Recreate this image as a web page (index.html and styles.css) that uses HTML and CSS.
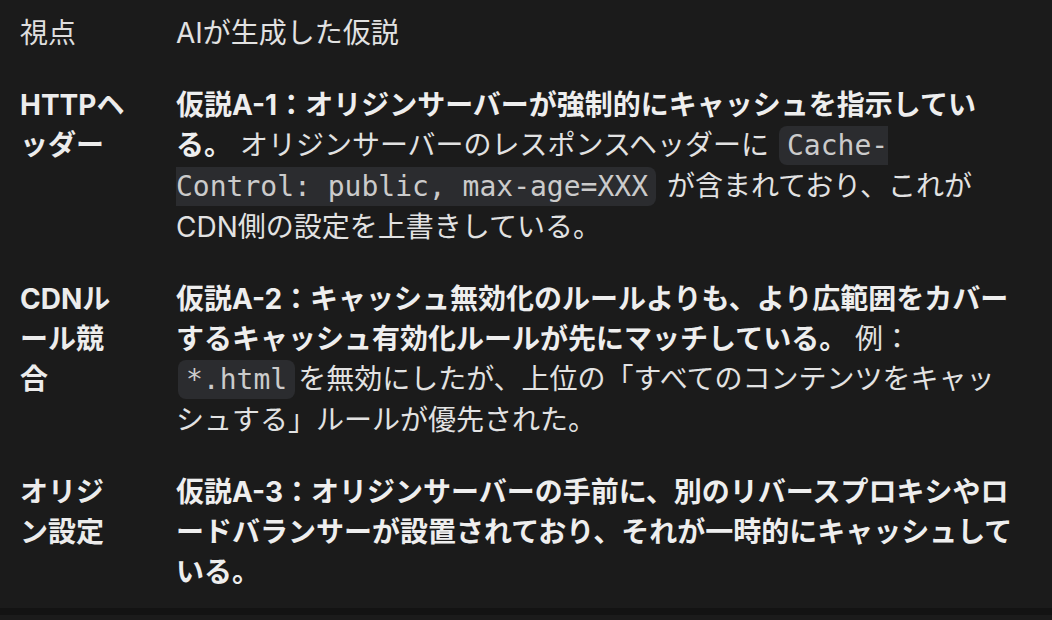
FILE: index.html
```html
<!DOCTYPE html>
<html lang="ja">
<head>
    <meta charset="UTF-8">
    <meta name="viewport" content="width=device-width, initial-scale=1.0">
    <title>仮説一覧</title>
    <link rel="stylesheet" href="styles.css">
</head>
<body>
    <!-- 仮説テーブル -->
    <div class="hypo-table">
        <div class="row head">
            <div class="cell label">視点</div>
            <div class="cell">AIが生成した仮説</div>
        </div>

        <div class="row">
            <div class="cell label">HTTPヘッダー</div>
            <div class="cell"><strong>仮説A-1：オリジンサーバーが強制的にキャッシュを指示している。</strong> オリジンサーバーのレスポンスヘッダーに <code>Cache-Control: public, max-age=XXX</code> が含まれており、これがCDN側の設定を上書きしている。</div>
        </div>

        <div class="row">
            <div class="cell label">CDNルール競合</div>
            <div class="cell"><strong>仮説A-2：キャッシュ無効化のルールよりも、より広範囲をカバーするキャッシュ有効化ルールが先にマッチしている。</strong> 例： <code>*.html</code>を無効にしたが、上位の「すべてのコンテンツをキャッシュする」ルールが優先された。</div>
        </div>

        <div class="row">
            <div class="cell label">オリジン設定</div>
            <div class="cell"><strong>仮説A-3：オリジンサーバーの手前に、別のリバースプロキシやロードバランサーが設置されており、それが一時的にキャッシュしている。</strong></div>
        </div>
    </div>

    <div class="scroll-edge"></div>
</body>
</html>
```

FILE: styles.css
```css
body {
    margin: 0;
    background-color: #1b1b1b;
    color: #e2e2e2;
    font-family: Inter, "Noto Sans CJK JP", sans-serif;
    font-size: 28px;
    line-height: 40px;
}

/* テーブル全体 */
.hypo-table {
    padding: 0 31px 0 20px;
}

.row {
    display: grid;
    grid-template-columns: 106px 1fr;
    column-gap: 50px;
    padding: 16px 0;
}

.row.head {
    padding-top: 13px;
}

.label {
    font-weight: 700;
    color: #ececec;
}

.head .label {
    font-weight: 400;
    color: #dedede;
}

.cell strong {
    font-weight: 700;
    color: #eeeeee;
}

code {
    font-family: "DejaVu Sans Mono", monospace;
    font-size: 28px;
    color: #cbcbcb;
    background-color: #2b2c2f;
    border-radius: 8px;
    padding: 3px 8px;
    margin: 0 3px 0 2px;
}

/* 下端のバー */
.scroll-edge {
    height: 7px;
    background-color: #131313;
}
```
